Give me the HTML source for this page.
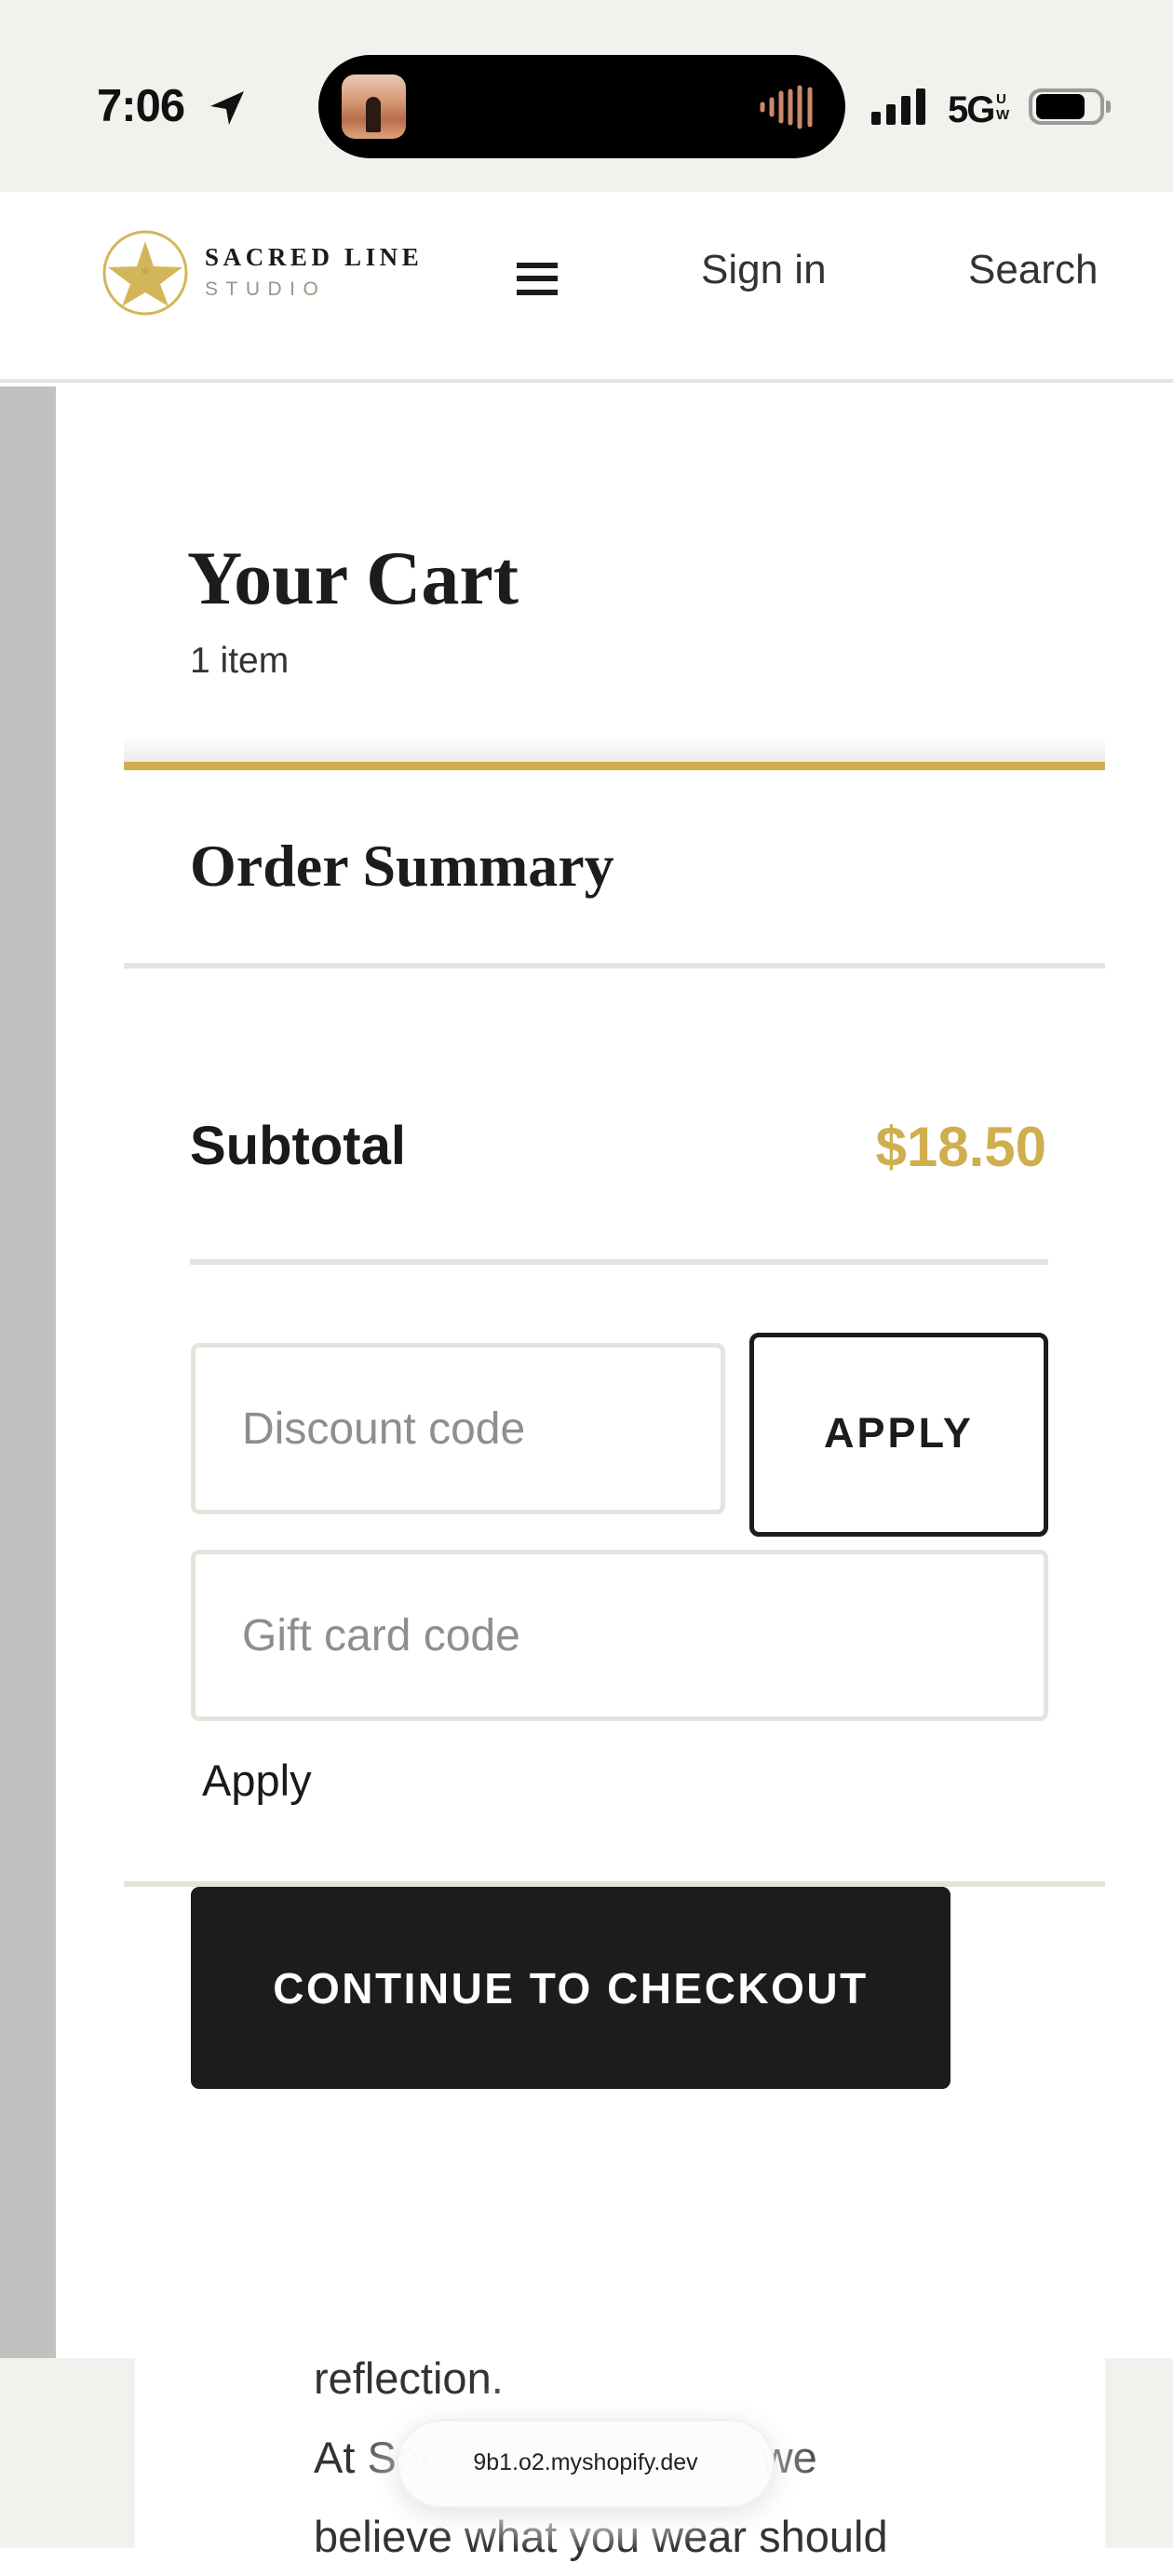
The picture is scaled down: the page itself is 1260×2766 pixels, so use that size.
<!DOCTYPE html>
<html><head><meta charset="utf-8">
<style>
*{margin:0;padding:0;box-sizing:border-box}
html,body{width:1260px;height:2736px;overflow:hidden;background:#fff;font-family:"Liberation Sans",sans-serif}
.a{position:absolute}
.serif{font-family:"Liberation Serif",serif;font-weight:bold;color:#1c1c1c}
</style></head><body>
<!-- status bar -->
<div class="a" style="left:0;top:0;width:1260px;height:206px;background:#f2f1ed"></div>
<div class="a" style="left:104px;top:86px;font-size:49px;font-weight:bold;color:#111;letter-spacing:-1px">7:06</div>
<svg class="a" style="left:224px;top:96px" width="40" height="40" viewBox="0 0 40 40"><path d="M38 2 L2 18 L19 21 L22 38 Z" fill="#111"/></svg>
<div class="a" style="left:342px;top:59px;width:566px;height:111px;background:#000;border-radius:56px"></div>
<div class="a" style="left:367px;top:80px;width:69px;height:69px;border-radius:14px;background:linear-gradient(180deg,#e8c9b4 0%,#d79b77 40%,#b86d4c 70%,#e0a47c 100%)"></div>
<div class="a" style="left:393px;top:104px;width:16px;height:38px;border-radius:8px 8px 2px 2px;background:#2a1a14"></div>
<svg class="a" style="left:815px;top:90px" width="68" height="50" viewBox="0 0 68 50"><g stroke-linecap="round" stroke-width="5" stroke="#c98a6a"><line x1="4" y1="22" x2="4" y2="28"/><line x1="14" y1="17" x2="14" y2="33"/><line x1="24" y1="10" x2="24" y2="40"/><line x1="34" y1="8" x2="34" y2="42"/><line x1="44" y1="4" x2="44" y2="46"/><line x1="55" y1="6" x2="55" y2="44"/></g></svg>
<div class="a" style="left:936px;top:120px;width:10px;height:14px;background:#111;border-radius:2px"></div>
<div class="a" style="left:952px;top:112px;width:10px;height:22px;background:#111;border-radius:2px"></div>
<div class="a" style="left:968px;top:103px;width:10px;height:31px;background:#111;border-radius:2px"></div>
<div class="a" style="left:984px;top:95px;width:10px;height:39px;background:#111;border-radius:2px"></div>
<div class="a" style="left:1018px;top:96px;font-size:40px;font-weight:bold;color:#111;letter-spacing:-2px">5G</div>
<div class="a" style="left:1070px;top:98px;font-size:15px;font-weight:bold;color:#111;line-height:17px">U<br>W</div>
<div class="a" style="left:1105px;top:95px;width:81px;height:39px;border:4px solid #9a9a9a;border-radius:13px"></div>
<div class="a" style="left:1113px;top:101px;width:52px;height:27px;background:#000;border-radius:7px"></div>
<div class="a" style="left:1188px;top:108px;width:5px;height:13px;background:#9a9a9a;border-radius:0 3px 3px 0"></div>
<!-- header -->
<div class="a" style="left:0;top:206px;width:1260px;height:205px;background:#fff;border-bottom:4px solid #e6e4dd"></div>
<svg class="a" style="left:110px;top:247px" width="92" height="92" viewBox="0 0 92 92"><circle cx="46" cy="46" r="44" fill="none" stroke="#d4b65a" stroke-width="3"/><path d="M46 12 L55 39 L86 40 L62 58 L71 82 L46 67 L21 82 L30 58 L6 40 L37 39 Z" fill="#d4b65a"/><circle cx="46" cy="44" r="4" fill="#c9a94e"/></svg>
<div class="a serif" style="left:220px;top:261px;font-size:27px;letter-spacing:4.6px;color:#1a1a1a;white-space:nowrap">SACRED LINE</div>
<div class="a" style="left:220px;top:299px;font-size:21px;letter-spacing:8.5px;color:#8f9c85">STUDIO</div>
<div class="a" style="left:555px;top:282px;width:44px;height:6px;background:#1c1c1c"></div>
<div class="a" style="left:555px;top:296px;width:44px;height:6px;background:#1c1c1c"></div>
<div class="a" style="left:555px;top:311px;width:44px;height:6px;background:#1c1c1c"></div>
<div class="a" style="left:753px;top:265px;font-size:44px;color:#333">Sign in</div>
<div class="a" style="left:1040px;top:265px;font-size:44px;color:#333">Search</div>
<!-- gray strip -->
<div class="a" style="left:0;top:415px;width:60px;height:2117px;background:#c1c1bf"></div>
<!-- content -->
<div class="a serif" style="left:201px;top:574px;font-size:82px;line-height:94px;white-space:nowrap">Your Cart</div>
<div class="a" style="left:204px;top:688px;font-size:39px;color:#333">1 item</div>
<div class="a" style="left:133px;top:790px;width:1054px;height:28px;background:linear-gradient(180deg,rgba(0,0,0,0),rgba(0,0,0,0.08))"></div>
<div class="a" style="left:133px;top:818px;width:1054px;height:9px;background:#d0b04e"></div>
<div class="a serif" style="left:204px;top:893px;font-size:64px;white-space:nowrap">Order Summary</div>
<div class="a" style="left:133px;top:1034px;width:1054px;height:6px;background:#e6e3dc"></div>
<div class="a" style="left:204px;top:1197px;font-size:58px;font-weight:bold;color:#1a1a1a">Subtotal</div>
<div class="a" style="right:136px;top:1197px;font-size:60px;font-weight:bold;color:#cfae4e">$18.50</div>
<div class="a" style="left:204px;top:1352px;width:922px;height:6px;background:#e6e3dc"></div>
<div class="a" style="left:205px;top:1442px;width:574px;height:184px;border:5px solid #e6e3dc;border-radius:9px"></div>
<div class="a" style="left:260px;top:1507px;font-size:48px;color:#8e8e8e">Discount code</div>
<div class="a" style="left:805px;top:1431px;width:321px;height:219px;border:5px solid #1c1c1c;border-radius:10px"></div>
<div class="a" style="left:805px;top:1513px;width:321px;text-align:center;font-size:45px;font-weight:bold;color:#1c1c1c;letter-spacing:3px">APPLY</div>
<div class="a" style="left:205px;top:1664px;width:921px;height:184px;border:5px solid #e6e3dc;border-radius:9px"></div>
<div class="a" style="left:260px;top:1729px;font-size:48px;color:#8e8e8e">Gift card code</div>
<div class="a" style="left:217px;top:1884px;font-size:47px;color:#1a1a1a">Apply</div>
<div class="a" style="left:133px;top:2020px;width:1054px;height:6px;background:#e6e3dc"></div>
<div class="a" style="left:205px;top:2026px;width:816px;height:217px;background:#1c1c1c;border-radius:9px"></div>
<div class="a" style="left:205px;top:2108px;width:816px;text-align:center;font-size:46px;font-weight:bold;color:#fff;letter-spacing:2.5px;white-space:nowrap">CONTINUE TO CHECKOUT</div>
<!-- bottom -->
<div class="a" style="left:0;top:2532px;width:1260px;height:204px;background:#f2f1ed"></div>
<div class="a" style="left:145px;top:2532px;width:1042px;height:204px;background:#fff"></div>
<div class="a" style="left:337px;top:2511px;font-size:47px;line-height:85px;color:#333;white-space:nowrap">reflection.<br>At Sacred Line Studio, we<br>believe what you wear should</div>
<div class="a" style="left:380px;top:2560px;width:500px;height:176px;border-radius:90px;background:radial-gradient(ellipse at center,rgba(255,255,255,0.9) 40%,rgba(255,255,255,0) 75%)"></div>
<div class="a" style="left:426px;top:2598px;width:406px;height:95px;border-radius:48px;background:rgba(252,252,252,0.96);box-shadow:0 6px 30px rgba(0,0,0,0.12);border:2px solid #f0f0f0"></div>
<div class="a" style="left:426px;top:2630px;width:406px;text-align:center;font-size:25px;color:#222">9b1.o2.myshopify.dev</div>
</body></html>
